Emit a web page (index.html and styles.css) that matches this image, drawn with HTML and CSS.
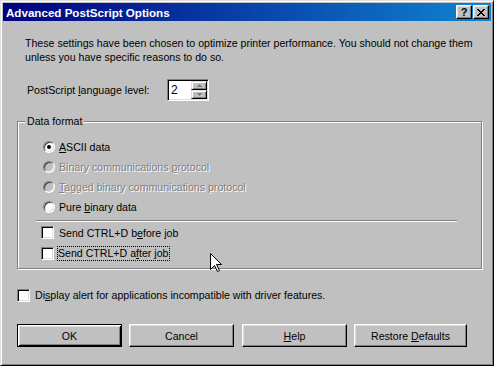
FILE: index.html
```html
<!doctype html>
<html>
<head>
<meta charset="UTF-8">
<title>Advanced PostScript Options</title>
<link rel="stylesheet" href="styles.css">
</head>
<body>
<div class="dialog">
  <div class="titlebar">
    <span class="title">Advanced PostScript Options</span>
    <span class="caption-btn help-btn">?</span>
    <span class="caption-btn close-btn">
      <svg width="8" height="7" viewBox="0 0 8 7"><path d="M0 0h2v1h1v1h2v-1h1v-1h2v1h-1v1h-1v1h-1v1h1v1h1v1h1v1h-2v-1h-1v-1h-2v1h-1v1h-2v-1h1v-1h1v-1h1v-1h-1v-1h-1v-1h-1z" fill="#000"/></svg>
    </span>
  </div>

  <div class="content">
    <p class="intro">These settings have been chosen to optimize printer performance. You should not change them<br>unless you have specific reasons to do so.</p>

    <div class="level-row">
      <span class="level-label">PostScript <u>l</u>anguage level:</span>
      <div class="spin">
        <span class="spin-value">2</span>
        <div class="spin-btns">
          <span class="spin-btn"><svg width="5" height="3" viewBox="0 0 5 3"><path d="M2 0h1v1h1v1h1v1h-5v-1h1v-1h1z" fill="#808080"/></svg></span>
          <span class="spin-btn"><svg width="5" height="3" viewBox="0 0 5 3"><path d="M0 0h5v1h-1v1h-1v1h-1v-1h-1v-1h-1z" fill="#808080"/></svg></span>
        </div>
      </div>
    </div>

    <fieldset class="group">
      <legend>Data format</legend>
      <div class="opt"><span class="radio checked"></span><span><u>A</u>SCII data</span></div>
      <div class="opt disabled"><span class="radio"></span><span>Binary communications <u>p</u>rotocol</span></div>
      <div class="opt disabled"><span class="radio"></span><span><u>T</u>agged binary communications protocol</span></div>
      <div class="opt"><span class="radio"></span><span>Pure <u>b</u>inary data</span></div>
      <div class="sep"></div>
      <div class="opt tall"><span class="check"></span><span>Send CTRL+D b<u>e</u>fore job</span></div>
      <div class="opt tall"><span class="check"></span><span class="focus">Send CTRL+D a<u>f</u>ter job</span></div>
    </fieldset>

    <div class="alert-row"><span class="check"></span><span>Di<u>s</u>play alert for applications incompatible with driver features.</span></div>

    <div class="buttons">
      <span class="btn default"><span>OK</span></span>
      <span class="btn"><span>Cancel</span></span>
      <span class="btn help"><span><u>H</u>elp</span></span>
      <span class="btn wide"><span>Restore <u>D</u>efaults</span></span>
    </div>
  </div>

  <svg class="cursor" width="12" height="19" viewBox="0 0 12 19">
    <path d="M0.5 0.5V16.5L4.5 12.5L7.5 18.5L9.5 17.5L6.5 11.5H11.5Z" fill="#fff" stroke="#000" stroke-width="1" stroke-linejoin="miter"/>
  </svg>
</div>
</body>
</html>
```

FILE: styles.css
```css
html, body {
	margin:0;
	background:#c0c0c0;
}

body {
	font-family:"Liberation Sans", Arial, sans-serif;
	font-size:10.6px;
	color:#000;
}

.dialog {
	position:relative;
	box-sizing:border-box;
	width:494px;
	height:366px;
	padding:2px;
	border:1px solid;
	border-color:#dfdfdf #000 #000 #dfdfdf;
	box-shadow:inset 1px 1px #fff, inset -1px -1px #808080;
	background:#c0c0c0;
}

/* caption */
.titlebar {
	display:flex;
	align-items:center;
	height:18px;
	padding:0 2px 0 3px;
	background:linear-gradient(to right, #000080, #1084d0);
}

.title {
	flex:1;
	color:#fff;
	font-weight:bold;
	font-size:11.6px;
}

.caption-btn {
	display:flex;
	align-items:center;
	justify-content:center;
	box-sizing:border-box;
	width:16px;
	height:14px;
	background:#c0c0c0;
	border:1px solid;
	border-color:#fff #000 #000 #fff;
	box-shadow:inset -1px -1px #808080, inset 1px 1px #dfdfdf;
	font-weight:bold;
	font-size:11px;
	line-height:12px;
}

.help-btn {
	margin-right:1px;
}

/* body */
.content {
	padding:15px 0 0 14px;
}

.intro {
	margin:0 0 0 8px;
	line-height:14px;
}

.level-row {
	display:flex;
	align-items:center;
	margin:15px 0 0 10px;
}

.level-label {
	width:140px;
}

.spin {
	display:flex;
	box-sizing:border-box;
	width:42px;
	height:22px;
	padding:1px;
	border:1px solid;
	border-color:#808080 #fff #fff #808080;
	box-shadow:inset 1px 1px #000, inset -1px -1px #dfdfdf;
	background:#fff;
}

.spin-value {
	flex:1;
	padding:2px 0 0 2px;
	font-size:12px;
}

.spin-btns {
	display:flex;
	flex-direction:column;
	width:16px;
}

.spin-btn {
	display:flex;
	align-items:center;
	justify-content:center;
	box-sizing:border-box;
	height:9px;
	background:#c0c0c0;
	border:1px solid;
	border-color:#dfdfdf #000 #000 #dfdfdf;
	box-shadow:inset 1px 1px #fff, inset -1px -1px #808080;
}

/* group box */
.group {
	width:465px;
	box-sizing:border-box;
	margin:13px 0 0 0;
	padding:9px 0 4px 0;
	border:1px solid #808080;
	box-shadow:inset 1px 1px #fff, 1px 1px #fff;
}

.group legend {
	margin-left:7px;
	padding:0 2px;
	line-height:14px;
	background:#c0c0c0;
}

.opt {
	display:flex;
	align-items:center;
	height:20px;
	padding-left:25px;
}

.opt.tall {
	height:21px;
	padding-left:23px;
}

.opt.disabled {
	color:#808080;
	text-shadow:1px 1px 0 #fff;
}

.radio {
	position:relative;
	box-sizing:border-box;
	width:12px;
	height:12px;
	margin-right:4px;
	border-radius:50%;
	border:1px solid;
	border-color:#808080 #fff #fff #808080;
	box-shadow:inset 1px 1px #404040, inset -1px -1px #dfdfdf;
	background:#fff;
}

.disabled .radio {
	background:#c0c0c0;
}

.radio.checked:after {
	content:"";
	position:absolute;
	left:3px;
	top:3px;
	width:4px;
	height:4px;
	border-radius:50%;
	background:#000;
}

.check {
	box-sizing:border-box;
	width:13px;
	height:13px;
	margin-right:5px;
	border:1px solid;
	border-color:#808080 #fff #fff #808080;
	box-shadow:inset 1px 1px #000, inset -1px -1px #dfdfdf;
	background:#fff;
}

.focus {
	margin-left:-1px;
	padding:0 1px 1px 0;
	outline:1px dotted #000;
	outline-offset:0;
}

.sep {
	width:421px;
	margin:3px 0 0 18px;
	border-top:1px solid #808080;
	border-bottom:1px solid #fff;
}

.alert-row {
	display:flex;
	align-items:center;
	height:20px;
	margin-top:16px;
}

/* push buttons */
.buttons {
	display:flex;
	gap:7px;
	margin-top:19px;
}

.btn {
	display:flex;
	align-items:center;
	justify-content:center;
	box-sizing:border-box;
	width:105px;
	height:23px;
	border:1px solid;
	border-color:#fff #000 #000 #fff;
	box-shadow:inset -1px -1px #808080, inset 1px 1px #dfdfdf;
}

.btn.default {
	border-color:#000;
	box-shadow:inset 1px 1px #fff, inset -1px -1px #000, inset 2px 2px #dfdfdf, inset -2px -2px #808080;
}

.btn.help {
	margin-left:1px;
}

.btn.wide {
	width:113px;
}

.cursor {
	position:absolute;
	left:209px;
	top:252px;
}
```
